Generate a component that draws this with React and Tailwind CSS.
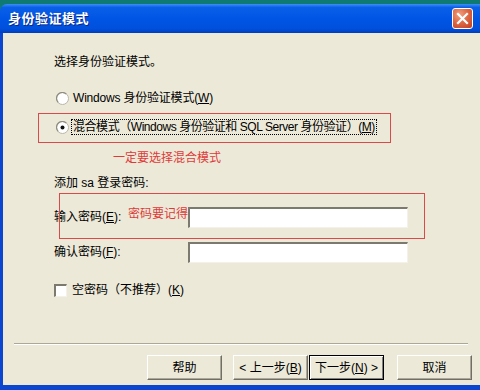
import React from "react";

const font = { fontFamily: '"Liberation Sans", "Noto Sans CJK SC", sans-serif' };

function Radio({ checked }) {
    return (
        <svg width="13" height="13" viewBox="0 0 13 13" className="shrink-0">
            <circle cx="6.5" cy="6.5" r="6" fill="#ffffff" stroke="#b9b6a8" strokeWidth="1" />
            <path d="M2.2 10.3 A5.4 5.4 0 0 1 10.3 2.2" fill="none" stroke="#8f8d80" strokeWidth="1.2" />
            {checked && <circle cx="6.5" cy="6.5" r="2" fill="#111" />}
        </svg>
    );
}

function Key({ children }) {
    return <span className="underline underline-offset-1">{children}</span>;
}

function Sunken({ className }) {
    return (
        <div className={"bg-white border-t-2 border-l-2 border-t-[#7c7a6e] border-l-[#7c7a6e] border-b border-r border-b-[#f4f2e8] border-r-[#f4f2e8] " + className}></div>
    );
}

function Btn({ children, focused }) {
    return (
        <div className={"h-[25px] w-[75px] flex items-center justify-center text-[12px] text-black bg-[#ece9d8] border " +
            (focused
                ? "border-black shadow-[inset_1px_1px_0_#fff,inset_-1px_-1px_0_#808080]"
                : "border-t-white border-l-white border-b-[#716f64] border-r-[#716f64] shadow-[inset_-1px_-1px_0_#aca899]")}>
            {children}
        </div>
    );
}

export default function App() {
    return (
        <div className="w-[480px] h-[390px] overflow-hidden bg-[#0e7a72] pt-[4px]" style={font}>
            <div className="w-[486px] h-[386px] flex flex-col">
                {/* title bar */}
                <div className="h-[29px] shrink-0 rounded-t-[7px] flex items-center justify-between pl-[8px] pr-[13px] bg-[linear-gradient(to_bottom,#3d8ef5_0%,#0a5fe8_12%,#0055e5_50%,#0050dc_85%,#003dc0_100%)]">
                    <span className="text-white font-bold text-[13px] tracking-[0.5px] [text-shadow:1px_1px_0_#0a2a8a]">身份验证模式</span>
                    <div className="w-[21px] h-[21px] rounded-[3px] border border-white flex items-center justify-center bg-[radial-gradient(circle_at_35%_30%,#f0a080_0%,#de6a45_45%,#c23d1c_100%)]">
                        <svg width="13" height="13" viewBox="0 0 13 13">
                            <path d="M2 2 L11 11 M11 2 L2 11" stroke="#fff" strokeWidth="2.2" strokeLinecap="square" />
                        </svg>
                    </div>
                </div>

                {/* body */}
                <div className="relative flex-1 bg-[#ece9d8] border-l-[3px] border-b-[5px] border-[#0a46d0] text-[12px] text-black flex flex-col">
                    <div className="h-[16px] mt-[21px] pl-[51px] flex items-center">选择身份验证模式。</div>

                    <div className="h-[16px] mt-[20px] pl-[53px] flex items-center gap-[4px]">
                        <Radio />
                        <span className="tracking-[-0.2px]">Windows 身份验证模式(<Key>W</Key>)</span>
                    </div>

                    <div className="h-[16px] mt-[13px] pl-[53px] flex items-center gap-[2px]">
                        <Radio checked />
                        <span className="border border-dotted border-black px-[1px] leading-[14px] whitespace-nowrap tracking-[-0.45px]">混合模式（Windows 身份验证和 SQL Server 身份验证）(<Key>M</Key>)</span>
                    </div>

                    <div className="h-[16px] mt-[15px] pl-[110px] flex items-center text-[#de3a3a]">一定要选择混合模式</div>

                    <div className="h-[16px] mt-[9px] pl-[51px] flex items-center">添加 sa 登录密码:</div>

                    <div className="h-[20px] mt-[16px] pl-[51px] flex items-center">
                        <span className="w-[74px] whitespace-nowrap">输入密码(<Key>E</Key>):</span>
                        <span className="w-[60px] whitespace-nowrap text-[12px] text-[#de3a3a] -mt-[6px]">密码要记得</span>
                        <Sunken className="w-[220px] h-[21px]" />
                    </div>

                    <div className="h-[20px] mt-[15px] pl-[51px] flex items-center">
                        <span className="w-[134px]">确认密码(<Key>F</Key>):</span>
                        <Sunken className="w-[220px] h-[21px]" />
                    </div>

                    <div className="h-[16px] mt-[20px] pl-[51px] flex items-center gap-[5px]">
                        <Sunken className="w-[13px] h-[13px]" />
                        <span>空密码（不推荐）(<Key>K</Key>)</span>
                    </div>

                    <div className="mt-[45px] ml-[11px] w-[454px] h-[2px] border-t border-t-[#aca899] border-b border-b-white"></div>

                    <div className="mt-[10px] pl-[144px] flex items-center">
                        <Btn>帮助</Btn>
                        <div className="w-[11px]"></div>
                        <Btn>&lt; 上一步(<Key>B</Key>)</Btn>
                        <div className="w-[1px]"></div>
                        <Btn focused>下一步(<Key>N</Key>) &gt;</Btn>
                        <div className="w-[13px]"></div>
                        <Btn>取消</Btn>
                    </div>

                    {/* red annotation boxes */}
                    <div className="absolute left-[35px] top-[80px] w-[353px] h-[30px] border border-[#d94a4a]"></div>
                    <div className="absolute left-[56px] top-[160px] w-[366px] h-[46px] border border-[#d94a4a]"></div>
                </div>
            </div>
        </div>
    );
}
